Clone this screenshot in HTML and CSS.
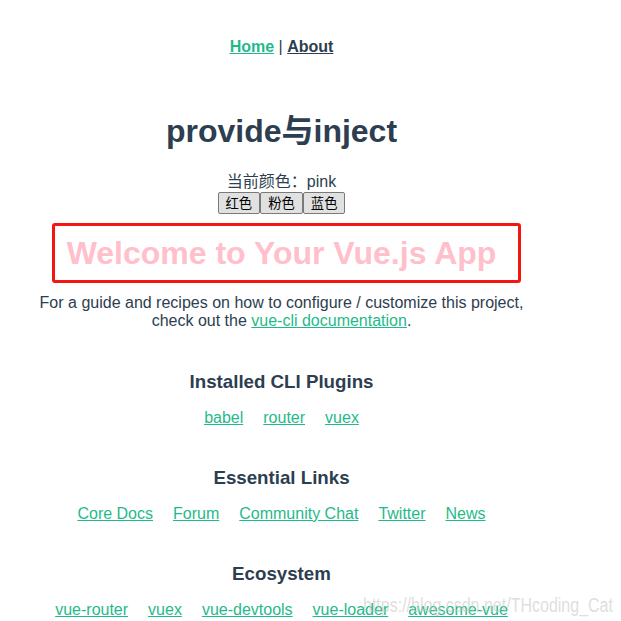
FILE: index.html
```html
<!DOCTYPE html>
<html>
  <head>
    <link rel="stylesheet" href="styles.css">
  </head>
  <body>
    <div id="app">
      <div id="nav">
        <a href="#/" class="router-link-exact-active">Home</a> |
        <a href="#/about">About</a>
      </div>
      <div class="home">
        <h1 class="title">provide与inject</h1>
        <div class="current">当前颜色：pink</div>
        <div class="btns"><button>红色</button><button>粉色</button><button>蓝色</button></div>
        <div class="hello">
          <h1 class="welcome">Welcome to Your Vue.js App</h1>
          <p>
            For a guide and recipes on how to configure / customize this project,<br>
            check out the
            <a href="#">vue-cli documentation</a>.
          </p>
          <h3>Installed CLI Plugins</h3>
          <ul><li><a href="#">babel</a></li><li><a href="#">router</a></li><li><a href="#">vuex</a></li></ul>
          <h3>Essential Links</h3>
          <ul><li><a href="#">Core Docs</a></li><li><a href="#">Forum</a></li><li><a href="#">Community Chat</a></li><li><a href="#">Twitter</a></li><li><a href="#">News</a></li></ul>
          <h3>Ecosystem</h3>
          <ul><li><a href="#">vue-router</a></li><li><a href="#">vuex</a></li><li><a href="#">vue-devtools</a></li><li><a href="#">vue-loader</a></li><li><a href="#">awesome-vue</a></li></ul>
        </div>
      </div>
    </div>
    <div class="watermark">https://blog.csdn.net/THcoding_Cat</div>
  </body>
</html>
```

FILE: styles.css
```css
body {
  margin: 8px;
  background: #fff;
}
#app {
  width: 547px;
  font-family: "Liberation Sans", Arial, "Noto Sans CJK SC", sans-serif;
  text-align: center;
  color: #2c3e50;
}
#nav {
  padding: 30px;
  line-height: 18px;
}
#nav a {
  font-weight: bold;
  color: #2c3e50;
}
#nav a.router-link-exact-active {
  color: #1fba8a;
}
.title {
  font-size: 32px;
  line-height: 42px;
  padding-top: 3px;
  margin: 21.44px 0 18.44px;
}
.current {
  line-height: 21px;
}
.btns {
  line-height: 21px;
}
.btns button {
  font-family: "Liberation Sans", Arial, "Noto Sans CJK SC", sans-serif;
  font-size: 13.33px;
  height: 22px;
  padding: 0 7px;
  margin: 0;
  vertical-align: top;
  color: #000;
  background: #e1e1e1;
  border: 1px solid #7a7a7a;
  border-radius: 2px;
}
.welcome {
  position: relative;
  font-size: 32px;
  line-height: 37px;
  margin: 21.44px 0;
  color: pink;
}
.welcome::after {
  content: "";
  position: absolute;
  left: 44px;
  top: -12.5px;
  width: 463px;
  height: 54px;
  border: 3px solid #f5170f;
  border-radius: 3px;
}
.hello p {
  margin: 16px 0;
  padding-bottom: 1px;
}
.hello h3 {
  font-size: 18.72px;
  margin: 40px 0 0;
}
.hello ul {
  list-style-type: none;
  padding: 0;
  margin: 16px 0;
}
.hello li {
  display: inline-block;
  margin: 0 10px;
}
.hello a {
  color: #1fba8a;
}
.watermark {
  position: absolute;
  left: 363px;
  top: 594px;
  font-family: "Liberation Sans", Arial, sans-serif;
  font-size: 20px;
  line-height: 23px;
  color: rgba(200, 200, 200, 0.6);
  white-space: nowrap;
  transform: scaleX(0.8);
  transform-origin: left top;
  pointer-events: none;
}
```
